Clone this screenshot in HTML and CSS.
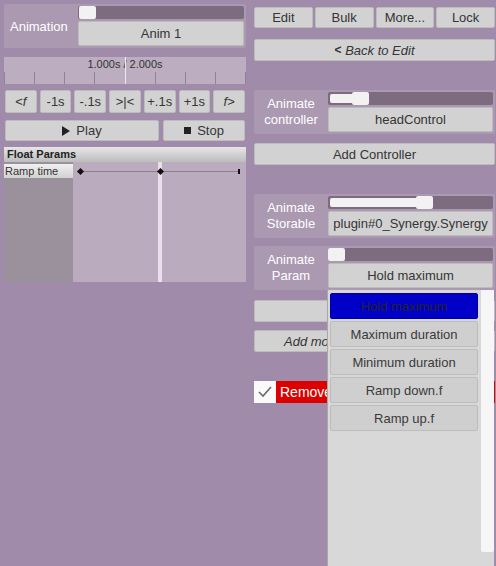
FILE: index.html
```html
<!DOCTYPE html>
<html>
<head>
<meta charset="utf-8">
<link rel="stylesheet" href="styles.css">
</head>
<body>
<div class="page">
  <div class="col left">
    <div class="panel anim">
      <div class="plabel">Animation</div>
      <div class="pctrl">
        <div class="track"><div class="thumb" style="margin-left:1px"></div></div>
        <div class="btn big">Anim 1</div>
      </div>
    </div>
    <div class="timeline">
      <div class="ttext">1.000s / 2.000s</div>
      <div class="ticks">
        <span></span><span></span><span></span><span></span><span class="mid"></span><span></span><span></span><span></span><span></span>
      </div>
      <div class="cursor"></div>
    </div>
    <div class="steps">
      <div class="btn">&lt;<i>f</i></div>
      <div class="btn">-1s</div>
      <div class="btn">-.1s</div>
      <div class="btn">&gt;|&lt;</div>
      <div class="btn">+.1s</div>
      <div class="btn">+1s</div>
      <div class="btn"><i>f</i>&gt;</div>
    </div>
    <div class="playrow">
      <div class="btn play"><span class="tri"></span>Play</div>
      <div class="btn stop"><span class="sq"></span>Stop</div>
    </div>
    <div class="fparams">
      <div class="fhead">Float Params</div>
      <div class="fbody">
        <div class="fnames"><div class="fname">Ramp time</div></div>
        <div class="fcurve">
          <div class="ckeys">
            <span class="dia"></span>
            <span class="cline"></span>
            <span class="dia"></span>
            <span class="cline"></span>
            <span class="bar"></span>
          </div>
          <div class="scrub"></div>
        </div>
      </div>
    </div>
  </div>
  <div class="col right">
    <div class="toprow">
      <div class="btn">Edit</div>
      <div class="btn">Bulk</div>
      <div class="btn">More...</div>
      <div class="btn">Lock</div>
    </div>
    <div class="btn wide back"><b>&lt;</b>&nbsp;<i>Back to Edit</i></div>
    <div class="panel ctl g1">
      <div class="plabel c">Animate<br>controller</div>
      <div class="pctrl">
        <div class="track"><div class="fill" style="width:22px"></div><div class="thumb"></div></div>
        <div class="btn big">headControl</div>
      </div>
    </div>
    <div class="btn wide g2">Add Controller</div>
    <div class="panel ctl g3">
      <div class="plabel c">Animate<br>Storable</div>
      <div class="pctrl">
        <div class="track"><div class="fill" style="width:86px"></div><div class="thumb"></div></div>
        <div class="btn big">plugin#0_Synergy.Synergy</div>
      </div>
    </div>
    <div class="panel ctl g4">
      <div class="plabel c">Animate<br>Param</div>
      <div class="pctrl">
        <div class="track"><div class="thumb"></div></div>
        <div class="btn big hold">Hold maximum</div>
      </div>
    </div>
    <div class="btn wide g5"></div>
    <div class="btn wide g6"><i>Add more...</i></div>
    <div class="toggle g7">
      <div class="check"><svg width="16" height="14" viewBox="0 0 16 14"><path d="M2 7 L6 11 L14 2" fill="none" stroke="#6a6a6a" stroke-width="1.6"/></svg></div>
      <div class="tlabel">Remove</div>
    </div>
  </div>
  <div class="popup">
    <div class="items">
      <div class="item sel">Hold maximum</div>
      <div class="item">Maximum duration</div>
      <div class="item">Minimum duration</div>
      <div class="item">Ramp down.f</div>
      <div class="item">Ramp up.f</div>
    </div>
    <div class="scroll"></div>
  </div>
</div>
</body>
</html>
```
FILE: styles.css
```css
* { box-sizing: border-box; }
html, body { margin: 0; padding: 0; }
body {
  width: 496px; height: 566px; overflow: hidden;
  background: #a08baa;
  font-family: "Liberation Sans", Arial, sans-serif;
  font-size: 13px;
  color: #333;
}
.page { position: relative; display: flex; width: 496px; height: 566px; }
.col { display: flex; flex-direction: column; }
.left { margin-left: 4px; width: 242px; padding-top: 4px; }
.right { margin-left: 8px; width: 241px; padding-top: 7px; }

.btn {
  background: #d2d2d2;
  border: 1px solid #bcbcbc;
  border-radius: 2px;
  display: flex; align-items: center; justify-content: center;
  white-space: nowrap; overflow: hidden;
  color: #353535;
}
.btn i { font-style: italic; }

.panel {
  background: #ab99b2;
  border-radius: 2px;
  display: flex;
  height: 44px;
}
.plabel {
  color: #fff; font-size: 13px;
  display: flex; align-items: center;
  padding-left: 6px;
  width: 74px;
}
.plabel.c { justify-content: center; text-align: center; padding-left: 0; line-height: 16px; }
.pctrl { flex: 1; display: flex; flex-direction: column; padding: 2px 2px 2px 0; gap: 2px; }
.track {
  height: 13px; background: #7d6b80; border-radius: 2px;
  display: flex; align-items: stretch;
}
.thumb { width: 17px; background: #f2f2f2; border-radius: 2px; }
.fill { background: #f2f2f2; margin: 2px 0 2px 2px; border-radius: 2px 0 0 2px; }
.btn.big { flex: 1; }

.anim .plabel { width: 74px; }

.timeline {
  margin-top: 9px; height: 27px; background: #bcaec0; position: relative;
  display: flex; flex-direction: column;
}
.ttext { text-align: center; font-size: 11px; color: #333; height: 15px; line-height: 15px; }
.ticks { flex: 1; display: flex; justify-content: space-between; align-items: flex-end; }
.ticks span { width: 1px; height: 12px; background: #8f8493; }
.ticks span.mid { background: transparent; }
.cursor { position: absolute; left: 121px; top: 0; bottom: 0; width: 1px; background: #f0e8f0; }

.steps { margin-top: 6px; height: 23px; display: flex; gap: 3px; padding: 0 1px; }
.steps .btn { flex: 1; }
.playrow { margin-top: 7px; height: 21px; display: flex; gap: 4px; padding: 0 1px; }
.play { width: 154px; font-size: 13px; }
.stop { flex: 1; }
.tri { width: 0; height: 0; border-left: 8px solid #222; border-top: 5px solid transparent; border-bottom: 5px solid transparent; margin-right: 6px; }
.sq { width: 7px; height: 7px; background: #222; margin-right: 6px; }

.fparams { margin-top: 6px; display: flex; flex-direction: column; }
.fhead {
  height: 15px; background: linear-gradient(#e6e6e6, #bdbdbd);
  font-weight: bold; color: #222; font-size: 11px; line-height: 15px; padding-left: 3px;
}
.fbody { height: 120px; display: flex; }
.fnames { width: 69px; background: #9b919c; padding-top: 2px; }
.fname {
  height: 14px; background: linear-gradient(#f0f0f0, #d2d2d2);
  font-size: 11px; color: #333; line-height: 14px; padding-left: 1px;
}
.fcurve { flex: 1; background: #bbabbf; position: relative; }
.ckeys { position: absolute; left: 5px; right: 6px; top: 6px; height: 7px; display: flex; align-items: center; }
.cline { flex: 1; height: 1px; background: #8c8090; }
.dia { width: 5px; height: 5px; background: #111; transform: rotate(45deg); }
.bar { width: 2px; height: 5px; background: #111; }
.scrub { position: absolute; left: 85px; top: 0; bottom: 0; width: 4px; background: #eadfea; }
.ckeys { z-index: 1; }

.toprow { height: 21px; display: flex; gap: 2px; }
.toprow .btn { flex: 1; }
.wide { height: 22px; }
.back { margin-top: 11px; }
.back b { font-weight: bold; font-size: 12px; }
.g1 { margin-top: 29px; }
.g2 { margin-top: 9px; }
.g3 { margin-top: 29px; }
.g4 { margin-top: 8px; }
.g5 { margin-top: 10px; }
.g6 { margin-top: 8px; justify-content: flex-start; padding-left: 29px; }
.g7 { margin-top: 29px; }
.ctl .pctrl { padding-left: 0; }
.ctl .plabel { width: 74px; }

.toggle { height: 22px; display: flex; }
.check { width: 22px; background: #fafafa; display: flex; align-items: center; justify-content: center; }
.tlabel { flex: 1; background: #dd0000; color: #fff; font-size: 14px; display: flex; align-items: center; padding-left: 4px; }

.popup {
  position: absolute; left: 327px; top: 290px; width: 167px; height: 276px;
  background: #d8d8d8; display: flex; padding: 2px 0 0 2px;
  border-left: 1px solid #a8a8a8;
}
.items { width: 149px; display: flex; flex-direction: column; gap: 2px; padding-top: 1px; }
.item {
  height: 26px; background: #cfcfcf; border: 1px solid #bdbdbd; border-radius: 2px;
  display: flex; align-items: center; justify-content: center; color: #3a3a3a; font-size: 13px;
}
.item.sel { background: #0000c8; color: #242424; border-color: #0000a0; }
.scroll { margin-left: 3px; width: 13px; height: 262px; margin-top: -2px; background: #f6f6f6; border-radius: 0 0 2px 2px; }
```
